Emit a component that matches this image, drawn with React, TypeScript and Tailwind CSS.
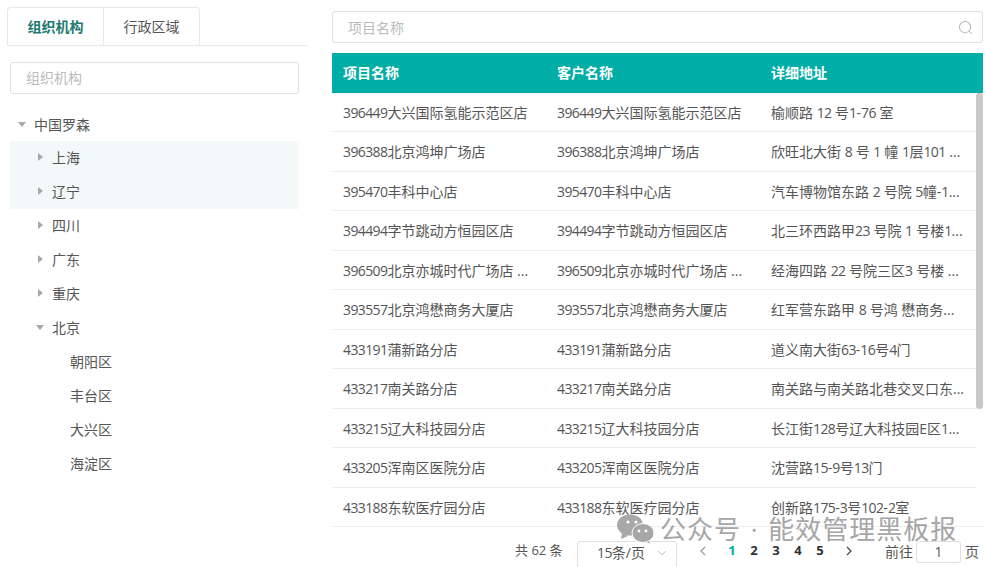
import React from "react";

const rows = [
  ["396449大兴国际氢能示范区店", "396449大兴国际氢能示范区店", "榆顺路 12 号1-76 室"],
  ["396388北京鸿坤广场店", "396388北京鸿坤广场店", "欣旺北大街 8 号 1 幢 1层101 ..."],
  ["395470丰科中心店", "395470丰科中心店", "汽车博物馆东路 2 号院 5幢-1..."],
  ["394494字节跳动方恒园区店", "394494字节跳动方恒园区店", "北三环西路甲23 号院 1 号楼1..."],
  ["396509北京亦城时代广场店 ...", "396509北京亦城时代广场店 ...", "经海四路 22 号院三区3 号楼 ..."],
  ["393557北京鸿懋商务大厦店", "393557北京鸿懋商务大厦店", "红军营东路甲 8 号鸿 懋商务..."],
  ["433191蒲新路分店", "433191蒲新路分店", "道义南大街63-16号4门"],
  ["433217南关路分店", "433217南关路分店", "南关路与南关路北巷交叉口东..."],
  ["433215辽大科技园分店", "433215辽大科技园分店", "长江街128号辽大科技园E区1..."],
  ["433205浑南区医院分店", "433205浑南区医院分店", "沈营路15-9号13门"],
  ["433188东软医疗园分店", "433188东软医疗园分店", "创新路175-3号102-2室"],
];

const Caret = ({ down }: { down?: boolean }) => (
  <svg width="10" height="10" viewBox="0 0 10 10" className="shrink-0">
    {down ? <path d="M1 3h8L5 8z" fill="#a8a8a8" /> : <path d="M3 1l5 4-5 4z" fill="#a8a8a8" />}
  </svg>
);

const TreeRow = ({ label, level, caret, down, active }: { label: string; level: 0 | 1 | 2; caret?: boolean; down?: boolean; active?: boolean }) => (
  <div className={`flex h-[34px] items-center ${active ? "bg-[#f3f9f9]" : ""} ${level === 0 ? "pl-[7px]" : level === 1 ? "pb-[2px] pl-[25px]" : "pb-[2px] pl-[60px]"}`}>
    {caret && <Caret down={down} />}
    <span className={`${caret ? "ml-[7px]" : ""} text-[14px] text-[#555]`}>{label}</span>
  </div>
);

// Digits in the reference run narrower than any installed Latin face.
const Cell = ({ text }: { text: string }) => (
  <span className="whitespace-nowrap">
    {text.split(/(\d+)/).map((part, i) =>
      i % 2 === 1 ? (
        <span key={i} className="tracking-[-0.6px]">{part}</span>
      ) : (
        part
      )
    )}
  </span>
);

export default function App() {
  return (
    <div
      className="relative flex h-[567px] w-[986px] overflow-hidden bg-white text-[14px] text-[#555]"
      style={{ fontFamily: '"Open Sans","Noto Sans CJK SC",sans-serif' }}
    >
      {/* left */}
      <div className="w-[307px] shrink-0 pl-[7px] pt-[7px]">
        <div className="flex h-[39px] border-b border-[#e8e8e8]">
          <div className="flex h-[39px] w-[96px] items-center justify-center rounded-tl-[4px] border-l border-t border-[#e8e8e8] pb-[2px] font-bold text-[#1d7a72]">组织机构</div>
          <div className="flex h-[39px] w-[97px] items-center justify-center rounded-tr-[4px] border-l border-r border-t border-[#e8e8e8] pb-[2px] text-[#555]">行政区域</div>
        </div>
        <div className="ml-[3px] mt-[16px] flex h-[32px] w-[289px] items-center rounded-[3px] border border-[#dcdfe6] pb-[2px] pl-[15px] text-[#bbb]">组织机构</div>
        <div className="ml-[3px] mt-[13px] w-[289px]">
          <TreeRow label="中国罗森" level={0} caret down />
          <TreeRow label="上海" level={1} caret active />
          <TreeRow label="辽宁" level={1} caret active />
          <TreeRow label="四川" level={1} caret />
          <TreeRow label="广东" level={1} caret />
          <TreeRow label="重庆" level={1} caret />
          <TreeRow label="北京" level={1} caret down />
          <TreeRow label="朝阳区" level={2} />
          <TreeRow label="丰台区" level={2} />
          <TreeRow label="大兴区" level={2} />
          <TreeRow label="海淀区" level={2} />
        </div>
      </div>

      {/* right */}
      <div className="ml-[25px] w-[651px] shrink-0 pt-[11px]">
        <div className="flex h-[32px] items-center justify-between rounded-[3px] border border-[#dcdfe6] pl-[15px] pr-[9px] text-[#bbb]">
          <span>项目名称</span>
          <svg width="15" height="15" viewBox="0 0 16 16" fill="none" stroke="#b5b5b5" strokeWidth="1.1">
            <circle cx="7.5" cy="7.5" r="6" />
            <path d="M12 12l2.5 2.5" />
          </svg>
        </div>
        <div className="mt-[10px] grid h-[39.5px] grid-cols-[214px_214px_1fr] items-center bg-[#00ada7] pl-[11px] font-bold text-white">
          <span>项目名称</span>
          <span>客户名称</span>
          <span>详细地址</span>
        </div>
        <div className="relative h-[433px] overflow-hidden">
          {rows.map((r, i) => (
            <div key={i} className="mr-[7px] grid h-[39.5px] grid-cols-[214px_214px_1fr] items-center border-b border-[#ebeef5] pl-[11px] pt-[1px] last:border-b-0">
              {r.map((c, j) => (
                <Cell key={j} text={c} />
              ))}
            </div>
          ))}
          <div className="absolute right-0 top-0 h-[316px] w-[7px] rounded-[3px] bg-[#c8c8c8]" />
        </div>
        <div className="flex h-[42px] items-start border-t border-[#ebeef5] pl-[183px] text-[13px]">
          <span className="mt-[14px] w-[62px]">共 62 条</span>
          <div className="mt-[14px] flex h-[28px] w-[100px] shrink-0 items-center justify-between rounded-[3px] border border-[#dcdfe6] pb-[4px] pl-[19px] pr-[9px] text-[14px]">
            <Cell text="15条/页" />
            <svg width="10" height="6" viewBox="0 0 10 6" fill="none" stroke="#c0c4cc"><path d="M1 1l4 4 4-4" /></svg>
          </div>
          <svg className="ml-[22px] mt-[19px]" width="8" height="10" viewBox="0 0 8 10" fill="none" stroke="#999" strokeWidth="1.2"><path d="M6 1L2 5l4 4" /></svg>
          <div className="ml-[14px] mt-[14px] flex w-[110px] font-bold text-[#303133]">
            <span className="w-[22px] text-center text-[#00ada7]">1</span>
            <span className="w-[22px] text-center">2</span>
            <span className="w-[22px] text-center">3</span>
            <span className="w-[22px] text-center">4</span>
            <span className="w-[22px] text-center">5</span>
          </div>
          <svg className="ml-[14px] mt-[19px]" width="8" height="10" viewBox="0 0 8 10" fill="none" stroke="#444" strokeWidth="1.2"><path d="M2 1l4 4-4 4" /></svg>
          <span className="ml-[32px] mt-[14px] text-[14px]">前往</span>
          <div className="ml-[3px] mt-[14px] flex h-[22px] w-[45px] items-center justify-center rounded-[3px] border border-[#dcdfe6] text-[14px]">1</div>
          <span className="ml-[4px] mt-[14px] text-[14px]">页</span>
        </div>
      </div>

      {/* watermark */}
      <div className="absolute left-[617px] top-[513px] flex items-center text-[26px] leading-[30px] tracking-[1px] text-[#a6a6a6] [word-spacing:2px]">
        <svg width="37" height="32" viewBox="0 0 37 32" className="mr-[6px]">
          <ellipse cx="13" cy="12" rx="13" ry="10.5" fill="#a8a8a8" />
          <path d="M5 20l-1 6 7-3z" fill="#a8a8a8" />
          <path d="M31 26l2 4.5-7-2.5z" fill="#a6a6a6" />
          <ellipse cx="26" cy="20" rx="11" ry="9.5" fill="#a6a6a6" stroke="#fff" strokeWidth="1" />
          <circle cx="11" cy="9" r="1.6" fill="#fff" />
          <circle cx="19" cy="9" r="1.6" fill="#fff" />
          <circle cx="22" cy="18" r="1.4" fill="#fff" />
          <circle cx="29" cy="18" r="1.4" fill="#fff" />
        </svg>
        <span className="whitespace-nowrap">公众号 · 能效管理黑板报</span>
      </div>
    </div>
  );
}
